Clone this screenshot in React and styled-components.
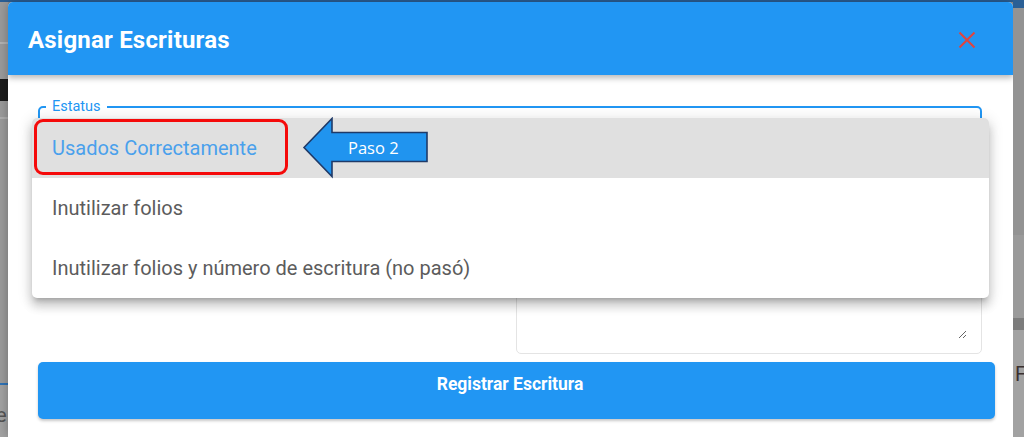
import React from 'react';
import styled, {createGlobalStyle} from 'styled-components';

const GlobalStyle = createGlobalStyle`
  html, body {
    margin: 0;
    padding: 0;
    width: 1024px;
    height: 437px;
    overflow: hidden;
    font-family: Roboto, "Liberation Sans", sans-serif;
  }
`;

const opciones = [
  'Usados Correctamente',
  'Inutilizar folios',
  'Inutilizar folios y número de escritura (no pasó)',
];

function CloseIcon() {
  return (
    <svg width="18" height="18" viewBox="0 0 18 18">
      <path d="M1.5 1.5 L16.5 16.5 M16.5 1.5 L1.5 16.5" stroke="#e0443e" strokeWidth="2" fill="none" />
    </svg>
  );
}

function StepArrow() {
  return (
    <svg width="128" height="62" viewBox="0 0 128 62">
      <path
        d="M2 30.5 L30 1.5 L30 15.5 L125 15.5 L125 44.5 L30 44.5 L30 59.5 Z"
        fill="#2094ef"
        stroke="#1f3a68"
        strokeWidth="1.6"
        strokeLinejoin="miter"
      />
      <text
        x="46"
        y="37"
        fill="#ffffff"
        fontSize="16.5"
        fontFamily="'Open Sans', 'Liberation Sans', sans-serif"
      >Paso 2</text>
    </svg>
  );
}

function App() {
  return (
    <Page>
      <GlobalStyle />
      <TopBar />
      <Row>
        <LeftStrip>
          <StripBand $h={40} $bg="#9c9c9c" />
          <StripBand $h={2} $bg="#b4b4b4" />
          <StripBand $h={35} $bg="#9c9c9c" />
          <StripBand $h={22} $bg="#1c1c1c" />
          <StripBand $h={16} $bg="#9c9c9c" />
          <StripBand $h={2} $bg="#b0b0b0" />
          <StripBand $h={264} $bg="#9c9c9c" />
          <StripBand $h={2} $bg="#2f74b8" />
          <StripBand $h={20} $bg="#a3a3a3" />
          <StripText>e</StripText>
        </LeftStrip>

        <Modal>
          <Header>
            <Title>Asignar Escrituras</Title>
            <CloseButton><CloseIcon /></CloseButton>
          </Header>

          <Body>
            <FieldArea>
              <SelectField>
                <legend>Estatus</legend>
              </SelectField>
              <FieldGrid>
                <PlainInput />
                <NotesBox>
                  <Notes />
                </NotesBox>
              </FieldGrid>
            </FieldArea>

            <SubmitButton>Registrar Escritura</SubmitButton>

            <Menu>
              {opciones.map((op, i) => (
                <MenuItem key={op} $selected={i === 0}>{op}</MenuItem>
              ))}
              <Highlight />
              <ArrowNote><StepArrow /></ArrowNote>
            </Menu>
          </Body>
        </Modal>

        <RightStrip>
          <StripBand $h={8} $bg="#2a5f95" />
          <StripBand $h={227} $bg="#939393" />
          <StripBand $h={83} $bg="#9a9a9a" />
          <StripBand $h={12} $bg="#7c7c7c" />
          <StripBand $h={34} $bg="#a2a2a2" />
          <StripText $dark>F</StripText>
        </RightStrip>
      </Row>
    </Page>
  );
}

const Page = styled.div`
  width: 1024px;
  height: 437px;
  display: flex;
  flex-direction: column;
  background: #8f8f8f;
  overflow: hidden;
`;

const TopBar = styled.div`
  height: 2px;
  flex: 0 0 2px;
  background: #2a5f95;
`;

const Row = styled.div`
  flex: 1;
  display: flex;
  min-height: 0;
`;

const LeftStrip = styled.div`
  width: 8px;
  flex: 0 0 8px;
  display: flex;
  flex-direction: column;
  background: #a3a3a3;
  overflow: hidden;
`;

const RightStrip = styled.div`
  flex: 1;
  display: flex;
  flex-direction: column;
  background: #a2a2a2;
  overflow: hidden;
  margin-top: -2px;
`;

const StripBand = styled.div`
  height: ${(p) => p.$h}px;
  flex: 0 0 ${(p) => p.$h}px;
  background: ${(p) => p.$bg};
`;

const StripText = styled.div`
  font-size: 20px;
  line-height: 20px;
  color: ${(p) => (p.$dark ? '#3a3030' : '#555')};
  padding-left: ${(p) => (p.$dark ? '2px' : '0')};
  margin-left: ${(p) => (p.$dark ? '0' : '-4px')};
`;

const Modal = styled.div`
  flex: 0 0 1005px;
  width: 1005px;
  background: #ffffff;
  border-radius: 5px 5px 0 0;
  display: flex;
  flex-direction: column;
  box-shadow: 0 0 12px rgba(0, 0, 0, 0.3);
  overflow: hidden;
`;

const Header = styled.header`
  height: 73px;
  flex: 0 0 73px;
  background: #2196f3;
  display: flex;
  align-items: center;
  justify-content: space-between;
  padding: 2px 37px 0 20px;
  box-sizing: border-box;
  box-shadow: 0 3px 6px rgba(0, 0, 0, 0.28);
  position: relative;
  z-index: 2;
`;

const Title = styled.h2`
  margin: 0;
  color: #ffffff;
  font-family: Roboto, "Liberation Sans", sans-serif;
  font-size: 24px;
  font-weight: 700;
  letter-spacing: 0.2px;
`;

const CloseButton = styled.button`
  border: none;
  background: transparent;
  padding: 0;
  width: 18px;
  height: 18px;
  display: flex;
  cursor: pointer;
`;

const Body = styled.div`
  position: relative;
  flex: 1;
  padding: 26px 18px 0 30px;
  display: flex;
  flex-direction: column;
`;

const FieldArea = styled.div`
  margin-right: 13px;
  display: flex;
  flex-direction: column;
  gap: 14px;
`;

const SelectField = styled.fieldset`
  margin: 0;
  padding: 0 6px;
  height: 56px;
  box-sizing: border-box;
  border: 2px solid #2196f3;
  border-radius: 5px;

  legend {
    padding: 0 6px;
    font-size: 14.5px;
    line-height: 12px;
    color: #2196f3;
  }
`;

const FieldGrid = styled.div`
  display: grid;
  grid-template-columns: 1fr 466px;
  gap: 13px;
  align-items: start;
`;

const PlainInput = styled.div`
  height: 56px;
  border: 1px solid #d8d8d8;
  border-radius: 4px;
`;

const NotesBox = styled.div`
  height: 183px;
  box-sizing: border-box;
  border: 1px solid #e4e4e4;
  border-radius: 5px;
  padding: 12px 14px 14px;
  display: flex;
`;

const Notes = styled.textarea`
  flex: 1;
  border: none;
  padding: 0;
  resize: vertical;
  outline: none;
  font-family: Roboto, sans-serif;
  font-size: 16px;
`;

const SubmitButton = styled.button`
  margin-top: 8px;
  height: 57px;
  border: none;
  border-radius: 5px;
  background: #2196f3;
  color: #ffffff;
  font-family: Roboto, "Liberation Sans", sans-serif;
  font-size: 17.5px;
  font-weight: 700;
  line-height: 22px;
  padding: 11px 13px 0 0;
  display: flex;
  justify-content: center;
  align-items: flex-start;
  box-shadow: 0 2px 3px rgba(0, 0, 0, 0.22);
`;

const Menu = styled.ul`
  position: absolute;
  top: 43px;
  left: 24px;
  width: 957px;
  margin: 0;
  padding: 0;
  list-style: none;
  background: #ffffff;
  border-radius: 5px;
  overflow: visible;
  box-shadow: 0 5px 5px -3px rgba(0, 0, 0, 0.2), 0 8px 10px 1px rgba(0, 0, 0, 0.14),
    0 3px 14px 2px rgba(0, 0, 0, 0.12);
  z-index: 3;
`;

const MenuItem = styled.li`
  height: 60px;
  display: flex;
  align-items: center;
  padding: 0 20px;
  font-size: 20px;
  color: ${(p) => (p.$selected ? '#4aa0ec' : '#5c5c5c')};
  background: ${(p) => (p.$selected ? '#e0e0e0' : 'transparent')};
  border-radius: ${(p) => (p.$selected ? '5px 5px 0 0' : '0')};
  &:last-of-type {
    border-radius: 0 0 5px 5px;
  }
`;

const Highlight = styled.div`
  position: absolute;
  left: 2px;
  top: 1px;
  width: 254px;
  height: 56px;
  box-sizing: border-box;
  border: 3px solid #f50a0a;
  border-radius: 9px;
`;

const ArrowNote = styled.div`
  position: absolute;
  left: 270px;
  top: -1px;
  width: 128px;
  height: 62px;
`;

export default App;
